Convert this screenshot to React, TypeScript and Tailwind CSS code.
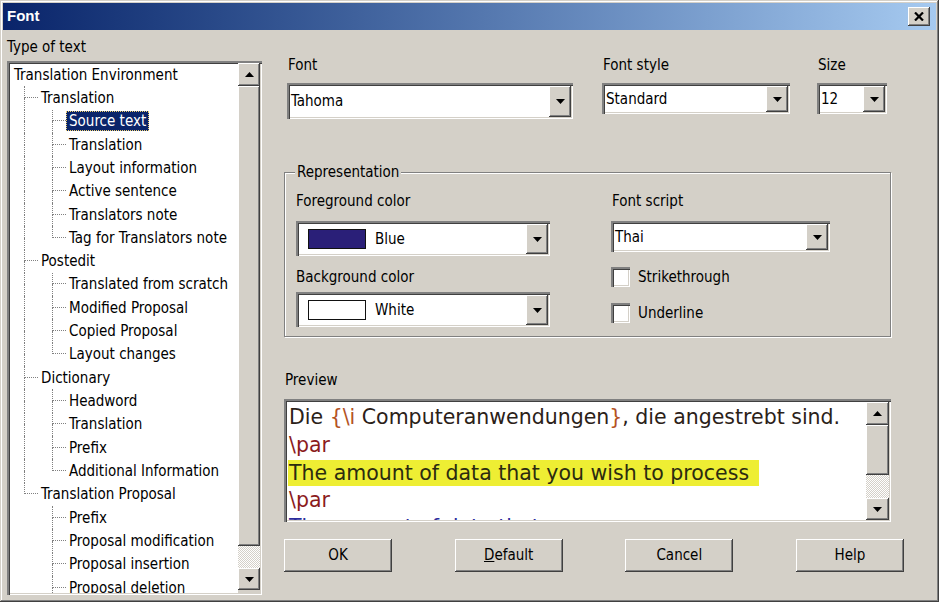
import React from 'react';

const RAISED =
  'shadow-[inset_-1px_-1px_#404040,inset_1px_1px_#ffffff,inset_-2px_-2px_#808080,inset_2px_2px_#d4d0c8]';
const SUNKEN =
  'shadow-[inset_2px_2px_#808080,inset_3px_3px_#404040,inset_-1px_-1px_#ffffff,inset_-2px_-2px_#d4d0c8]';
const UI = "font-['DejaVu_Sans_Condensed','Liberation_Sans',Arial,sans-serif] text-[15px] text-black";

type Guide = 'none' | 'pipe' | 'tee' | 'ell';
type Row = { label: string; guides: Guide[]; selected?: boolean };

const rows: Row[] = [
  { label: 'Translation Environment', guides: [] },
  { label: 'Translation', guides: ['tee'] },
  { label: 'Source text', guides: ['pipe', 'tee'], selected: true },
  { label: 'Translation', guides: ['pipe', 'tee'] },
  { label: 'Layout information', guides: ['pipe', 'tee'] },
  { label: 'Active sentence', guides: ['pipe', 'tee'] },
  { label: 'Translators note', guides: ['pipe', 'tee'] },
  { label: 'Tag for Translators note', guides: ['pipe', 'ell'] },
  { label: 'Postedit', guides: ['tee'] },
  { label: 'Translated from scratch', guides: ['pipe', 'tee'] },
  { label: 'Modified Proposal', guides: ['pipe', 'tee'] },
  { label: 'Copied Proposal', guides: ['pipe', 'tee'] },
  { label: 'Layout changes', guides: ['pipe', 'ell'] },
  { label: 'Dictionary', guides: ['tee'] },
  { label: 'Headword', guides: ['pipe', 'tee'] },
  { label: 'Translation', guides: ['pipe', 'tee'] },
  { label: 'Prefix', guides: ['pipe', 'tee'] },
  { label: 'Additional Information', guides: ['pipe', 'ell'] },
  { label: 'Translation Proposal', guides: ['ell'] },
  { label: 'Prefix', guides: ['none', 'tee'] },
  { label: 'Proposal modification', guides: ['none', 'tee'] },
  { label: 'Proposal insertion', guides: ['none', 'tee'] },
  { label: 'Proposal deletion', guides: ['none', 'tee'] },
];

function Arrow({ up }: { up?: boolean }) {
  return (
    <svg width="9" height="5" viewBox="0 0 9 5" className="block">
      <polygon points={up ? '4.5,0 9,5 0,5' : '0,0 9,0 4.5,5'} fill="#000" />
    </svg>
  );
}

function GuideCell({ kind }: { kind: Guide }) {
  const line = kind !== 'none';
  return (
    <div className="w-[28px] h-full flex shrink-0">
      <div className="w-[14px]" />
      <div className="w-[14px] h-full flex flex-col">
        <div
          className={`h-1/2 ${line ? 'border-l border-dotted border-[#808080]' : ''} ${
            kind === 'tee' || kind === 'ell' ? 'border-b border-dotted border-[#808080]' : ''
          }`}
        />
        <div
          className={`h-1/2 ${kind === 'pipe' || kind === 'tee' ? 'border-l border-dotted border-[#808080]' : ''}`}
        />
      </div>
    </div>
  );
}

function DropButton({ className = '' }: { className?: string }) {
  return (
    <div className={`w-[22px] shrink-0 bg-[#d4d0c8] flex items-center justify-center ${RAISED} ${className}`}>
      <Arrow />
    </div>
  );
}

function Combo({ className, children }: { className: string; children: React.ReactNode }) {
  return (
    <div className={`flex bg-white p-[3px_2px_2px_3px] ${SUNKEN} ${className}`}>
      <div className="flex-1 flex items-center pl-[1px] overflow-hidden whitespace-nowrap">{children}</div>
      <DropButton />
    </div>
  );
}

function Checkbox({ label }: { label: string }) {
  return (
    <div className="flex items-center h-[20px] leading-[18px]">
      <div className={`w-[19px] h-[20px] bg-white ${SUNKEN}`} />
      <span className="ml-[8px]">{label}</span>
    </div>
  );
}

function Button({ label }: { label: React.ReactNode }) {
  return (
    <div className={`w-[108px] h-[33px] flex items-center justify-center bg-[#d4d0c8] ${RAISED}`}>{label}</div>
  );
}

function ScrollTrack({ className }: { className: string }) {
  return (
    <div
      className={`bg-[repeating-conic-gradient(#ffffff_0_25%,#d4d0c8_0_50%)] bg-[length:2px_2px] ${className}`}
    />
  );
}

export default function App() {
  return (
    <div
      className={`w-[939px] h-[602px] overflow-hidden bg-[#d4d0c8] p-[3px] flex flex-col ${UI} shadow-[inset_-1px_-1px_#404040,inset_1px_1px_#d4d0c8,inset_-2px_-2px_#808080,inset_2px_2px_#ffffff]`}
    >
      {/* Title bar */}
      <div className="h-[27px] shrink-0 flex items-center bg-gradient-to-r from-[#0a246a] to-[#a6caf0] pl-[4px] pr-[6px]">
        <span className="text-white font-bold text-[15px] font-['Liberation_Sans',Arial,sans-serif]">Font</span>
        <div className="flex-1" />
        <div className={`w-[22px] h-[19px] bg-[#d4d0c8] flex items-center justify-center ${RAISED}`}>
          <svg width="10" height="9" viewBox="0 0 10 9">
            <path d="M1 0.5 L9 8.5 M9 0.5 L1 8.5" stroke="#000" strokeWidth="2.2" />
          </svg>
        </div>
      </div>

      <div className="flex flex-1 min-h-0">
        {/* Left column: tree */}
        <div className="ml-[4px] w-[255px] shrink-0 flex flex-col">
          <div className="mt-[8px] leading-[18px]">Type of text</div>
          <div className={`mt-[5px] h-[534px] bg-white flex p-[2px] ${SUNKEN}`}>
            <div className="flex-1 overflow-hidden pl-[1px] whitespace-nowrap">
              {rows.map((r, i) => (
                <div key={i} className="h-[23.32px] flex items-stretch">
                  {r.guides.map((g, j) => (
                    <GuideCell key={j} kind={g} />
                  ))}
                  <div className="flex items-center">
                    <span
                      className={`leading-[18px] ${i === 0 ? 'ml-[1px]' : ''} ${
                        r.selected
                          ? 'bg-[#0a246a] text-white border border-dotted border-[#f0d070] px-[2px] py-[0px]'
                          : 'px-[3px]'
                      }`}
                    >
                      {r.label}
                    </span>
                  </div>
                </div>
              ))}
            </div>
            <div className="w-[22px] flex flex-col">
              <div className={`h-[23px] bg-[#d4d0c8] flex items-center justify-center ${RAISED}`}>
                <Arrow up />
              </div>
              <div className={`flex-1 bg-[#d4d0c8] ${RAISED}`} />
              <ScrollTrack className="h-[22px]" />
              <div className={`h-[22px] bg-[#d4d0c8] flex items-center justify-center ${RAISED}`}>
                <Arrow />
              </div>
              <div className="h-[3px] bg-[#d4d0c8]" />
            </div>
          </div>
        </div>

        {/* Right column */}
        <div className="ml-[22px] w-[620px] flex flex-col pt-[26px]">
          <div className="flex ml-[3px]">
            <div className="w-[286px] flex flex-col">
              <div className="leading-[18px] pl-[1px]">Font</div>
              <Combo className="mt-[9px] h-[36px]">Tahoma</Combo>
            </div>
            <div className="ml-[29px] w-[188px] flex flex-col">
              <div className="leading-[18px] pl-[1px]">Font style</div>
              <Combo className="mt-[9px] h-[31px]">Standard</Combo>
            </div>
            <div className="ml-[27px] w-[70px] flex flex-col">
              <div className="leading-[18px] pl-[1px]">Size</div>
              <Combo className="mt-[9px] h-[31px]">12</Combo>
            </div>
          </div>

          {/* Representation group */}
          <div className="mt-[53px] w-[607px] h-[165px] border border-[#808080] shadow-[inset_1px_1px_#ffffff,1px_1px_#ffffff] flex flex-col">
            <div className="-mt-[10px] ml-[10px] w-fit px-[2px] bg-[#d4d0c8] leading-[18px]">Representation</div>
            <div className="flex pl-[11px]">
              <div className="w-[254px] flex flex-col">
                <div className="mt-[11px] leading-[18px]">Foreground color</div>
                <Combo className="mt-[11px] h-[35px]">
                  <div className="ml-[8px] w-[58px] h-[20px] bg-[#2a1f78] border border-[#111]" />
                  <span className="ml-[9px] leading-[18px]">Blue</span>
                </Combo>
                <div className="mt-[12px] leading-[18px]">Background color</div>
                <Combo className="mt-[6px] h-[35px]">
                  <div className="ml-[8px] w-[58px] h-[20px] bg-white border border-[#111]" />
                  <span className="ml-[9px] leading-[18px]">White</span>
                </Combo>
              </div>
              <div className="ml-[61px] w-[219px] flex flex-col">
                <div className="mt-[11px] leading-[18px] pl-[1px]">Font script</div>
                <Combo className="mt-[11px] h-[31px]">Thai</Combo>
                <div className="mt-[15px]">
                  <Checkbox label="Strikethrough" />
                </div>
                <div className="mt-[16px]">
                  <Checkbox label="Underline" />
                </div>
              </div>
            </div>
          </div>

          {/* Preview */}
          <div className="mt-[34px] leading-[18px] pl-[1px]">Preview</div>
          <div className={`mt-[10px] w-[607px] h-[123px] bg-white flex p-[3px_2px_2px_3px] ${SUNKEN}`}>
            <div className="flex-1 overflow-hidden pl-[2px] pt-[2px] whitespace-nowrap font-['DejaVu_Sans',sans-serif] text-[20.5px]">
              <div className="h-[27.5px] leading-[27.5px] text-[#2b2118]">
                Die <span className="text-[#b4531f]">{'{\\i '}</span>Computeranwendungen
                <span className="text-[#b4531f]">{'}'}</span>, die angestrebt sind.
              </div>
              <div className="h-[27.5px] leading-[27.5px] text-[#8b1c1c]">\par</div>
              <div className="h-[27.5px] flex items-center">
                <span className="-ml-[1px] pl-[1px] pr-[10px] leading-[26px] bg-[#eeee33] text-[#2b2b10]">
                  The amount of data that you wish to process
                </span>
              </div>
              <div className="h-[27.5px] leading-[27.5px] text-[#8b1c1c]">\par</div>
              <div className="h-[27.5px] leading-[27.5px] text-[#2c2c9c]">The amount of data that you process</div>
            </div>
            <div className="w-[23px] flex flex-col">
              <div className={`h-[23px] bg-[#d4d0c8] flex items-center justify-center ${RAISED}`}>
                <Arrow up />
              </div>
              <div className={`h-[50px] bg-[#d4d0c8] ${RAISED}`} />
              <ScrollTrack className="h-[23px]" />
              <div className={`h-[22px] bg-[#d4d0c8] flex items-center justify-center ${RAISED}`}>
                <Arrow />
              </div>
            </div>
          </div>

          {/* Buttons */}
          <div className="mt-[17px] flex justify-between w-[620px]">
            <Button label="OK" />
            <Button
              label={
                <span>
                  <span className="underline">D</span>efault
                </span>
              }
            />
            <Button label="Cancel" />
            <Button label="Help" />
          </div>
        </div>
      </div>
    </div>
  );
}
